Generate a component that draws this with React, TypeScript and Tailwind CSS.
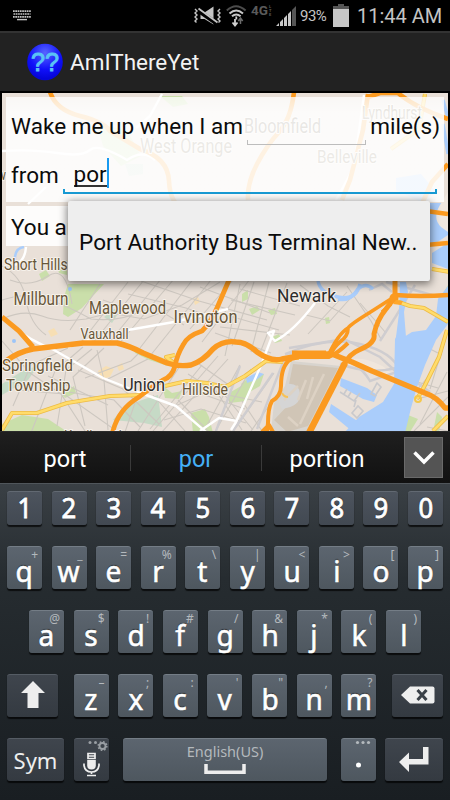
import React from "react";

type Label = { t: string; x: number; y: number; w: number; s: number; c?: string };

const labels: Label[] = [
  { t: "Bloomfield", x: 244, y: 132.5, w: 77, s: 19.5, c: "#524631" },
  { t: "West Orange", x: 140, y: 152.5, w: 92, s: 19.5, c: "#6b5c3d" },
  { t: "Belleville", x: 317, y: 163, w: 60, s: 18.5, c: "#6b5c3d" },
  { t: "Lyndhurst", x: 362, y: 119, w: 60, s: 17.5, c: "#6b5c3d" },
  { t: "w", x: -3, y: 180, w: 9, s: 15 },
  { t: "Short Hills", x: 4, y: 270, w: 63.5, s: 15.8 },
  { t: "Millburn", x: 13.5, y: 304.5, w: 55, s: 17.6 },
  { t: "Maplewood", x: 89, y: 314, w: 77, s: 17.8 },
  { t: "Irvington", x: 173.5, y: 323, w: 64, s: 17.8 },
  { t: "Vauxhall", x: 80.5, y: 338.5, w: 48, s: 14.8 },
  { t: "Springfield", x: 2, y: 370.5, w: 71, s: 16.8 },
  { t: "Township", x: 6, y: 390.5, w: 64.5, s: 16.8 },
  { t: "Hillside", x: 182, y: 395, w: 46, s: 16.4 },
  { t: "Union", x: 123, y: 391, w: 42, s: 18.2, c: "#2d2d2d" },
  { t: "Newark", x: 277, y: 301.500, w: 59, s: 19, c: "#2d2d2d" },
  { t: "Kenilworth", x: 64, y: 440.5, w: 62, s: 15 },
];

const parks = [
  "M68 284 L104 284 L92 297 L82 308 L68 317 L63 314 L64 297Z",
  "M39 274l7-4 4 6-8 5z",
  "M2 424l20-9 26 4 18 12v4H2z",
  "M131 345l14 7 18 6 5 8-19-6-14-7z",
  "M162 385l10 8 10-2-3 8-14-1z",
  "M191 413l14-4 4 8 4 16h-20z",
  "M229 393l14-8 8 4-4 12-18 2z",
  "M241 384l10-8 13-2-4 12-12 7z",
  "M242 294l6-4v9l-6 3z",
  "M249 309l8-3 3 4-8 5z",
  "M268 310l7-2 2 6-6 1z",
  "M325 318l4-1 1 6-4 1z",
  "M272 337l7-3 3 7-7 2z",
  "M62 395l12-9 2 7-11 5z",
  "M57 265l10-5v15l-8-2z",
  "M437 412l5 5-3 15h-6z",
  "M441 297l7-12v25l-5-2z",
  "M408 415l10 4-8 13h-8z",
  "M97 124l30 6 14 26-20 10-18-20z",
  "M160 96h22l6 8-15 3z",
];
const teal = [
  "M2 384l22-14 14-4-10 14-26 15z",
  "M113 420l12-14 20-7 13-4 4 32-18-4z",
  "M104 317l10-8 6 2-8 12z",
  "M125 164h18v10l-14 2z",
];
const sand = [
  "M48 331l6-3 4 6-7 3z",
  "M98 371l8-5 8 3-4 8-9 2z",
  "M117 366l5-3 2 6-5 2z",
  "M193 299l5-2 2 5-5 3z",
];
const minor = [
  "M2 266q20 10 24 34t20 35", "M10 280q20 8 38-4t24 28", "M2 300q24-8 45-1t44 20q30 3 50-8",
  "M2 319q22-10 40-3t44 3l24-6 34 6 38-14 38-23", "M70 330l30-46", "M80 344l48-62", "M92 344l52-64", "M107 345l54-66",
  "M118 345l56-66", "M140 348l54-70", "M150 356l61-76", "M190 329l43-49", "M202 342l48-63", "M103 300l28 10 31 2 22 13",
  "M128 294l58 14 46 16", "M141 281l58 20 68 19", "M200 287l70 26", "M215 312l64 18", "M215 333l56 20", "M240 284l-15 72",
  "M254 282l-22 64", "M269 282l-18 70", "M287 283l-27 70", "M231 300l64 15", "M240 289l60 17", "M220 327l70 8",
  "M2 341l28 32 31 21 24 37", "M13 406l18-41 37-17", "M31 433l24-62 28-24", "M57 426l9-56 26-21", "M85 426l-12-49 31-29",
  "M85 378l46-17 10-10", "M78 370l45 19 36 35", "M69 392l45 8 26 27", "M97 350l7 30 4 50", "M108 379l40-20",
  "M48 376l60 29", "M17 390l47 4 54 38", "M137 397l-12 35", "M153 395l32 36", "M180 366l-12 18-30 47", "M202 365l-52 64",
  "M218 356l-65 75", "M228 359l-67 74", "M240 365l-35 64", "M251 369l-36 63", "M173 407l29-13 43 15", "M164 420l37-11 45 14",
  "M188 374l30 19 44 9", "M199 364l34 24", "M178 400l31 32", "M212 385l30 45", "M223 393l30 37", "M242 401l20 30",
  "M274 373l-42 60", "M281 389l-30 42", "M306 315l24 6 26-29", "M308 334l39-42", "M347 286l24 35 10 18", "M360 303l26 30",
  "M300 285l28 21 22 11", "M418 343l24 12", "M407 379l31 9", "M428 377l-12 14", "M446 337l-16 52", "M447 372l-27 52",
  "M414 431l34-34", "M417 399l31-8", "M427 427l21 4",
];
const lilac = [
  "M285 354q42-18 75-10t40 27l-30 10q-12-21-42-27-22-4-43 0",
  "M340 364q30 11 56 4l34 24", "M289 348l55-9 36 18 34 31",
  "M380 341l16-25 19-31", "M369 290l13-6 10 8", "M386 282l60 17",
  "M285 357l-28 72", "M273 373l-40 58", "M240 366l-24 65",
];
const white = [
  "M12 326q17 14 42 24l49 28 43 17 30 11 30 26", "M68 347l24-8", "M128 330l46-8 54-13",
  "M315 303q-21 28-40 38l-7-8 6-2-12 32-26 59-5 8", "M200 431l19-13 18 3", "M2 151q30-2 55 2t33-3 37 10q16-11 28 0",
  "M28 204l18-17", "M162 94l-12 22-14 12", "M364 95l-10 72-18 33", "M15 265q10-4 11-18",
];
const yellow = [
  "M2 430l10-17h25l30-10 43-7 33-1", "M165 386l22-5 20 2 18 4 20-11 21-15 17 1",
  "M390 299l20 7 14 2 24 14", "M447 330l-8 27-15 30-7 12", "M433 431l15-15", "M425 94l-6 35-28 20", "M432 269l18 3",
  "M175 355l-9 2 8 6",
];
const orange = [
  "M50 92q6 18 30 24t30 15l30 18q28 9 29 32t15 28", "M294 92q-3 27-15 40t-22 32-9 36",
  "M448 214l-29-4 13-28 16-18", "M368 94l-5 36-13 50-8 20", "M368 97l12-4h18q18 15 50 26", "M448 243l-22 2",
];

function CityMap() {
  return (
    <svg className="absolute inset-0 h-full w-full" viewBox="2 93 446 338" preserveAspectRatio="none" fontFamily="Roboto, sans-serif">
      <rect x="2" y="93" width="446" height="338" fill="#e9e0d8" />
      {parks.map((d) => <path key={d} d={d} fill="#cadfaa" />)}
      {teal.map((d) => <path key={d} d={d} fill="#c6dac6" />)}
      {sand.map((d) => <path key={d} d={d} fill="#f7dfb4" />)}
      <g fill="none" stroke="#cdc7c0" strokeWidth="1.1">
        {minor.map((d) => <path key={d} d={d} />)}
      </g>
      <path d="M291 361l50 5-33 66h-37l3-29 11-17z" fill="#d8d4ce" />
      <path d="M293 364l45 4-30 58-21 6-13-12 17-18-2-18z" fill="#cdc0ae" opacity=".75" />
      <path d="M286 384q13-2 14 10t-18 15l-4-9 10-5z" fill="#d5d5d5" />
      <path d="M284 400l14-14m2 38l24-50m-36 43l10 9m8-46l-8 20m15-23l-6 22" stroke="#ddd2c4" strokeWidth="2.5" fill="none" />
      <path d="M342 364q9-8 25-4t25 14l-7 3q-18-12-43-13z" fill="#f0e6dc" />
      <g fill="none" stroke="#cfcdd0" strokeWidth="2.4">
        {lilac.map((d) => <path key={d} d={d} />)}
      </g>
      <g fill="#aacdfb">
        <path d="M395 339l3-6 6 4 8-5 14-2 10-14 2-17 10-13v38l-12 16-11 25-8 22-6 21-6 25h-61l15-16 24-15 11-18z" />
        <path d="M400 282h6l2 10-4 20 2 25h-10l3-24z" />
        <path d="M341 378l26 10 10 7-3 7-11-3-23-13z" />
        <path d="M331 404l31 20 3 8h-12l-24-20z" />
        <path d="M246 378l12-6 6 2-8 6-9 3z" />
        <path d="M426 203h17l5 12v20l-12 8h-10zM396 178l25-4 15 18-15 10-25-12z" />
        <path d="M432 253l16-10v26l-16-6z" />
      </g>
      <path d="M440 205q-8 13 1 22l7 5v-40z" fill="#efe7df" />
      <g fill="none" stroke="#aacdfb" strokeWidth="3.4">
        <path d="M318 281q2 12 20 16t22-13" />
        <path d="M338 299q12 3 20-10 8-7 15 0" />
        <path d="M15 262q-1-14 9-15" strokeWidth="2.5" />
        <path d="M443 100l5 18m-5 6l5 30" />
      </g>
      <circle cx="14" cy="341" r="2" fill="#9cc4f8" />
      <circle cx="70" cy="289" r="2" fill="#9cc4f8" />
      <g fill="none" stroke="#c9c9cc" strokeWidth="1.6">
        <path d="M371 394l6-11 4 4-6 9z M352 413l6-7 5 5-6 7z M340 392l14 9 6-8m-12 4l3-5m-7 2l3-5m9 11l-2 7" />
      </g>
      <g fill="none" stroke="#fff" strokeWidth="2.4" strokeLinejoin="round">
        {white.map((d) => <path key={d} d={d} />)}
      </g>
      <g fill="none" strokeLinejoin="round">
        <g stroke="#eebb45" strokeWidth="4.2">{yellow.map((d) => <path key={d} d={d} />)}</g>
        <g stroke="#ffdc6b" strokeWidth="2.6">{yellow.map((d) => <path key={d} d={d} />)}</g>
        <circle cx="418" cy="399" r="3" stroke="#f5c84c" strokeWidth="2" />
        <path d="M291 362q-2-5 8-3m-17 34q2 4 6 4" stroke="#f6c257" strokeWidth="2" />
      </g>
      <g fill="none" stroke="#fb9a20" strokeWidth="4.6" strokeLinejoin="round">
        {orange.map((d) => <path key={d} d={d} />)}
        <path d="M229 280l-12 28q-6 14-15 23-15 5-19 14-6 10-8 21-3 11-12 14-13 8-24 17-22 13-27 38" strokeWidth="4.8" />
        <path d="M2 317l17 14 14 16" strokeWidth="5" />
        <path d="M6 361q12-9 27-12l50-6h34q13 3 26 10l24 10q12 4 24 2 12-4 22-16 10-9 23-7 10 0 21 10 14 10 25 7l28-5 22 0q12 5 20 8l20 9 53 22q12 4 20 15h5" strokeWidth="5.4" strokeLinecap="round" />
        <path d="M267 432l1-9q0-15 4-22 9-5 9-15 0-21 10-27l8-2h30q9-4 19-14M262 432l7-7 4 7" strokeWidth="4" />
        <path d="M292 353h34" strokeWidth="5" />
        <path d="M309 433l36-70" strokeWidth="6.5" />
        <path d="M344 365q5-11 15-15 17-7 15-16 3-14 12-25l9-12v-18" strokeWidth="5" />
        <path d="M394 297l-25 16q-18 11-21 15-10 6-20 28M348 329q0 7-8 13-6 5-9 12M391 304l-9 8" strokeWidth="3.6" />
        <path d="M395 295q26 2 53 0" strokeWidth="4.4" />
      </g>
      <circle cx="394" cy="298" r="4.5" fill="#fb9a20" />
      <path d="M396 300l7 1-2 4-8-1z" fill="#ffa72a" />
      {labels.map((l) => (
        <text key={l.t} x={l.x} y={l.y} fontSize={l.s} textLength={l.w} lengthAdjust="spacingAndGlyphs"
          fill={l.c ?? "#675639"} stroke="#f6f1ea" strokeWidth="2.2" strokeLinejoin="round" paintOrder="stroke">{l.t}</text>
      ))}
    </svg>
  );
}

function StatusBar() {
  return (
    <div className="flex h-[31px] items-center bg-black text-[#c4c4c4]">
      <svg className="ml-[13px] h-[11px] w-[18px]" viewBox="0 0 18 11" stroke="#c4c4c4" fill="none">
        <path d="M0 1.2h18M.5 4h17M0 6.8h18" strokeWidth="1.7" strokeDasharray="1.7 .6" />
        <path d="M4 9.6h10" strokeWidth="1.4" />
      </svg>
      <svg className="ml-[162px] h-[19px] w-[30px]" viewBox="0 0 29 19" fill="#c4c4c4">
        <path d="M7 6.5h4l9-6v18l-9-5.5H7z" />
        <path d="M4 4l20 14" stroke="#000" strokeWidth="4.5" />
        <path d="M5 2.500l19 14" stroke="#c4c4c4" strokeWidth="1.8" />
        <path d="M1.500 3l2 2-2 2 2 2-2 2 2 2-2 2 1.500 1.500M26.500 3l-2 2 2 2-2 2 2 2-2 2 2 2-1.500 1.500" fill="none" stroke="#c4c4c4" strokeWidth="1.4" />
      </svg>
      <svg className="ml-[3px] h-[23px] w-[21px]" viewBox="0 0 21 23" fill="none">
        <path d="M.8 6.500q9.200-8.500 18.800 0" stroke="#4c4c4c" strokeWidth="2" />
        <path d="M3.500 9.500q6.700-6 13.500 0M6 12.300q4.200-3.600 8.600 0" stroke="#c9c9c9" strokeWidth="2" />
        <path d="M10.300 12.500v3M9 15v6M6.500 18.500L9 21.500l2.500-3" stroke="#d0d0d0" strokeWidth="1.800" />
        <path d="M14.500 20v-6M12.300 17l2.200-3 2.200 3" stroke="#6b6b6b" strokeWidth="1.500" />
      </svg>
      <div className="ml-[4px] flex h-[23px] items-start font-['Roboto',sans-serif] text-[#5a5a5a]">
        <span className="w-[18px] text-[13.500px] leading-[13px] font-bold">4G</span>
        <span className="flex w-[4px] flex-col gap-px pt-px text-[4px] leading-[3px] font-bold">
          <span>L</span><span>T</span><span>E</span>
        </span>
      </div>
      <svg className="ml-[3px] h-[20px] w-[20px]" viewBox="0 0 20 20">
        <path d="M0 20l3-3v3zM4 20v-4l3-3v7zM8 20v-8l3-3v11zM12 20V8l3-3v15z" fill="#c9c9c9" />
        <path d="M16 20V4l4-4v20z" fill="#555" />
      </svg>
      <span className="ml-[4px] w-[28px] pt-px font-['Roboto',sans-serif] text-[15px] tracking-[-0.500px] whitespace-nowrap">93%</span>
      <svg className="ml-[5px] h-[23px] w-[16px]" viewBox="0 0 16 23">
        <path d="M5 0h6v2H5zM0 2h16v4H0z" fill="#555" /><path d="M0 5h16v18H0z" fill="#c6c6c6" />
      </svg>
      <span className="ml-[8px] font-['Roboto',sans-serif] text-[20px] whitespace-nowrap">11:44 AM</span>
    </div>
  );
}

const panelText = "font-['Roboto',sans-serif] text-[22.5px] leading-[26px] whitespace-nowrap text-[#0b0b0b]";

function MapScreen() {
  return (
    <main className="relative h-[338px] overflow-hidden">
      <div className="relative mx-[2px] h-full overflow-hidden">
        <CityMap />
        <div className="relative px-1 pt-1">
          <section className="h-[105px] bg-linear-to-b from-white/75 via-white/87 via-15% to-white/87 pr-[4px] pl-[5px]">
            <div className="flex h-[48px] items-start pt-[16px]">
              <span className={`${panelText} tracking-[0.04px]`}>Wake me up when I am</span>
              <span className="mt-[27px] ml-auto h-[5px] w-[119px] border border-t-0 border-[#bdbdbd]" />
              <span className={`${panelText} ml-[4px]`}>mile(s)</span>
            </div>
            <div className="flex h-[50px] items-start pt-[17px]">
              <span className={`${panelText} w-[51.5px]`}>from</span>
              <div className="flex h-[32px] w-[374px] items-end">
                <div className="relative h-[5px] w-full border-2 border-t-0 border-[#189ad3]">
                  <span className={`${panelText} absolute bottom-[5px] left-[9px] border-b-2 border-[#333] pt-px !leading-[21px]`}>por</span>
                  <span className="absolute bottom-[4px] left-[42.5px] h-[30px] w-[1.500px] bg-[#189af0]" />
                </div>
              </div>
            </div>
          </section>
          <section className="mt-[4px] h-[40px] w-[200px] bg-white/90 pt-[8px] pl-[5px]">
            <span className={panelText}>You are</span>
          </section>
        </div>
      </div>
      <div className="absolute top-[108px] left-[68px] flex h-[80px] w-[362px] items-center rounded-[2px] bg-[#eee] pt-[2px] pl-[11px] shadow-[0_2px_8px_1px_rgba(0,0,0,0.5)]">
        <span className={`${panelText} tracking-[0.09px]`}>Port Authority Bus Terminal New..</span>
      </div>
    </main>
  );
}

const keyFace = "relative flex shrink-0 items-center justify-center rounded-[3px] border-t shadow-[0_1.5px_1px_rgba(0,0,0,0.7)]";
const lightKey = `${keyFace} h-[43px] border-[#747d86] bg-linear-to-b from-[#5c656f] to-[#4e575f]`;
const darkKey = `${keyFace} h-[43px] border-[#555c64] bg-linear-to-b from-[#3f454d] to-[#343a41]`;

function Key({ c, hint }: { c: string; hint: string }) {
  return (
    <div className={`${lightKey} w-[35px]`}>
      <span className="absolute top-[0px] right-[4px] font-['Noto_Sans',sans-serif] text-[12px] leading-[15px] text-[#b4b9bd]">{hint}</span>
      <span className="scale-x-95 pt-[5px] font-['Noto_Sans',sans-serif] text-[29.5px] leading-[34px] text-white [-webkit-text-stroke:0.6px_white] [text-shadow:0_-1px_1px_rgba(0,0,0,0.6)]">{c}</span>
    </div>
  );
}

const digits = "1234567890".split("");
const rowQ = [["q", "+"], ["w", "_"], ["e", "="], ["r", "%"], ["t", "\\"], ["y", "|"], ["u", "<"], ["i", ">"], ["o", "["], ["p", "]"]];
const rowA = [["a", "@"], ["s", "$"], ["d", "!"], ["f", "#"], ["g", "/"], ["h", "&"], ["j", "*"], ["k", "("], ["l", ")"]];
const rowZ = [["z", "–"], ["x", ";"], ["c", ":"], ["v", "'"], ["b", "\""], ["n", ","], ["m", "?"]];

function Keyboard() {
  return (
    <div className="flex h-[317px] flex-col gap-[21px] border-t border-[#50565b] bg-linear-to-b from-[#3a4045] via-[#262c30] via-30% to-[#191e22] px-[7px] pt-[7px]">
      <div className="flex justify-between">
        {digits.map((d) => (
          <div key={d} className={`${keyFace} h-[34px] w-[35px] border-[#626972] bg-linear-to-b from-[#4d545e] to-[#424952]`}>
            <span className="-mt-[2px] scale-x-95 font-['Noto_Sans',sans-serif] text-[27px] leading-[32px] text-white [-webkit-text-stroke:0.8px_white] [text-shadow:0_-1px_1px_rgba(0,0,0,0.6)]">{d}</span>
          </div>
        ))}
      </div>
      <div className="flex justify-between">{rowQ.map(([c, h]) => <Key key={c} c={c} hint={h} />)}</div>
      <div className="flex justify-between px-[22px]">{rowA.map(([c, h]) => <Key key={c} c={c} hint={h} />)}</div>
      <div className="flex justify-between">
        <div className={`${darkKey} w-[51px]`}>
          <svg className="-mt-[3px] h-[27px] w-[24px]" viewBox="0 0 24 27"><path d="M12 0l12 12h-6.500v15h-11V12H0z" fill="#eee" /></svg>
        </div>
        <div className="flex w-[303px] justify-between">{rowZ.map(([c, h]) => <Key key={c} c={c} hint={h} />)}</div>
        <div className={`${darkKey} w-[51px]`}>
          <svg className="-mt-[2px] h-[18px] w-[34px]" viewBox="0 0 34 18">
            <path d="M0 9l9-8.500h22.500a2 2 0 0 1 2 2v13a2 2 0 0 1-2 2H9z" fill="#eee" />
            <path d="M16.500 4l9 10m0-10l-9 10" stroke="#3a4047" strokeWidth="3" />
          </svg>
        </div>
      </div>
      <div className="flex">
        <div className={`${darkKey} w-[57px]`}>
          <span className="font-['Noto_Sans',sans-serif] text-[22px] text-[#eee]">Sym</span>
        </div>
        <div className={`${darkKey} ml-[10px] w-[35px]`}>
          <svg className="h-full w-full" viewBox="0 0 35 42" fill="none">
            <circle cx="16" cy="3.500" r="1.500" fill="#999ea3" /><circle cx="21.500" cy="3.500" r="1.500" fill="#999ea3" />
            <circle cx="28.500" cy="7" r="3" stroke="#999ea3" strokeWidth="1.800" />
            <circle cx="28.500" cy="7" r="4.300" stroke="#999ea3" strokeWidth="1.500" strokeDasharray="1.600 1.780" />
            <path d="M14 14.500h7v5h-7zM14 17h7" stroke="#eee" strokeWidth="1.700" />
            <path d="M13.200 21h8.600v5.500q0 4-4.300 4t-4.300-4z" fill="#eee" />
            <path d="M10 24.500v2q1 6.500 7.500 6.500t7.500-6.500v-2M17.500 33v2M13 36.500h9" stroke="#eee" strokeWidth="1.700" />
          </svg>
        </div>
        <div className={`${lightKey} ml-[14px] w-[204px] flex-col !justify-start`}>
          <span className="pt-[2px] font-['Noto_Sans',sans-serif] text-[14.500px] leading-[20px] text-[#b4b9bd]">English(US)</span>
          <svg className="mt-[3px] h-[10px] w-[42px]" viewBox="0 0 42 10"><path d="M2 0v8.200h38V0" fill="none" stroke="#eee" strokeWidth="3.500" /></svg>
        </div>
        <div className={`${lightKey} ml-[14px] w-[35px]`}>
          <svg className="h-full w-full" viewBox="0 0 35 42" fill="#b4b9bd">
            <circle cx="16.500" cy="3.500" r="1.600" /><circle cx="22" cy="3.500" r="1.600" /><circle cx="27.500" cy="3.500" r="1.600" />
            <circle cx="17.500" cy="26" r="2.500" fill="#fff" />
          </svg>
        </div>
        <div className={`${darkKey} ml-auto w-[58px]`}>
          <svg className="-mt-[3px] h-[26px] w-[30px]" viewBox="0 0 30 26"><path d="M0 16l10-9.500V13h14V1h5.500v17.500H10V26z" fill="#eee" /></svg>
        </div>
      </div>
    </div>
  );
}

export default function App() {
  return (
    <div className="h-[800px] w-[450px] overflow-hidden bg-black">
      <StatusBar />
      <header className="flex h-[60px] items-center border-t-2 border-[#333] bg-[#222]">
        <svg className="ml-[27px] h-[38px] w-[36px]" viewBox="0 0 36 38">
          <defs>
            <radialGradient id="ball" cx=".5" cy=".25" r=".7">
              <stop offset="0" stopColor="#5764ff" /><stop offset=".65" stopColor="#1010fa" /><stop offset="1" stopColor="#0505d8" />
            </radialGradient>
          </defs>
          <ellipse cx="18" cy="19" rx="17.800" ry="18.300" fill="url(#ball)" />
          <text x="4" y="28" fontSize="25" fontFamily="Liberation Sans, sans-serif" textLength="28" lengthAdjust="spacingAndGlyphs" fill="#5ac3f5" stroke="#5ac3f5" strokeWidth=".9">??</text>
        </svg>
        <h1 className="mt-[2px] ml-[7px] font-['Roboto',sans-serif] text-[22.500px] text-[#f3f3f3]">AmIThereYet</h1>
      </header>
      <div className="h-[2px] bg-black" />
      <MapScreen />
      <div className="flex h-[52px] items-center border-t border-[#2b2b2b] bg-linear-to-b from-[#1f1f1f] to-[#111] font-['Roboto',sans-serif] text-[23.500px] text-white">
        <span className="w-[130px] pt-[4px] text-center">port</span>
        <span className="h-[26px] w-px bg-[#3a3a3a]" />
        <span className="w-[130px] pt-[4px] text-center text-[#45b0f5]">por</span>
        <span className="h-[26px] w-px bg-[#3a3a3a]" />
        <span className="w-[130px] pt-[4px] text-center">portion</span>
        <div className="ml-[12px] flex h-[41px] w-[39px] items-center justify-center border border-[#6a6a6a] bg-[#545454]">
          <svg className="h-[14px] w-[22px]" viewBox="0 0 22 14"><path d="M1.500 1.500L11 11l9.500-9.500" stroke="#fff" strokeWidth="3.500" fill="none" /></svg>
        </div>
      </div>
      <Keyboard />
    </div>
  );
}
